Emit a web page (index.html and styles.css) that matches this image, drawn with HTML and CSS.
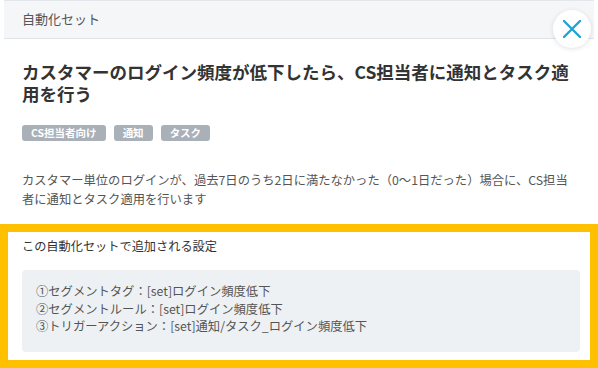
FILE: index.html
```html
<!DOCTYPE html>
<html lang="ja">
<head>
    <meta charset="UTF-8">
    <meta name="viewport" content="width=device-width, initial-scale=1.0">
    <title>自動化セット</title>
    <link rel="stylesheet" href="styles.css">
</head>
<body>
    <div class="modal">
        <div class="modal-header">自動化セット</div>

        <button class="close-btn" type="button" aria-label="閉じる">
            <svg width="18" height="18" viewBox="0 0 18 18">
                <path d="M1 1 L17 17 M17 1 L1 17" stroke="#1ea4d3" stroke-width="2.4" stroke-linecap="round" fill="none"/>
            </svg>
        </button>

        <div class="modal-body">
            <h1 class="set-title">カスタマーのログイン頻度が低下したら、CS担当者に通知とタスク適用を行う</h1>

            <div class="tags">
                <span class="tag">CS担当者向け</span>
                <span class="tag">通知</span>
                <span class="tag">タスク</span>
            </div>

            <p class="description">
                カスタマー単位のログインが、過去7日のうち2日に満たなかった（0〜1日だった）場合に、CS担当者に通知とタスク適用を行います
            </p>
        </div>

        <div class="settings">
            <div class="settings-title">この自動化セットで追加される設定</div>
            <div class="settings-box">
                <p>①セグメントタグ：[set]ログイン頻度低下</p>
                <p>②セグメントルール：[set]ログイン頻度低下</p>
                <p>③トリガーアクション：[set]通知/タスク_ログイン頻度低下</p>
            </div>
        </div>
    </div>
</body>
</html>
```

FILE: styles.css
```css
* {
    margin: 0;
    padding: 0;
    box-sizing: border-box;
}

body {
    font-family: "Noto Sans CJK JP", sans-serif;
    background: #fff;
    color: #555;
    width: 598px;
    height: 368px;
    overflow: hidden;
}

.modal {
    position: relative;
    width: 598px;
    height: 368px;
    display: flex;
    flex-direction: column;
}

.modal-header {
    margin: 0 4px;
    height: 39px;
    padding: 0 18px;
    background: #f5f6f8;
    border-top: 1px solid #e3e6ea;
    border-bottom: 1px solid #dfe3e8;
    font-size: 13px;
    line-height: 36px;
    color: #555;
}

.close-btn {
    position: absolute;
    top: 10px;
    right: 7px;
    width: 38px;
    height: 38px;
    border: none;
    border-radius: 50%;
    background: #fff;
    box-shadow: 0 1px 5px rgba(0, 0, 0, 0.12);
    display: flex;
    align-items: center;
    justify-content: center;
    cursor: pointer;
}

.modal-body {
    padding: 22px 22px 0;
}

.set-title {
    font-size: 17.5px;
    font-weight: bold;
    line-height: 22px;
    color: #333;
}

.tags {
    display: flex;
    gap: 8px;
    margin-top: 20px;
}

.tag {
    height: 16px;
    padding: 0 9px;
    border-radius: 3px;
    background: #a9b0b8;
    color: #fff;
    font-size: 10.5px;
    font-weight: bold;
    line-height: 16px;
}

.description {
    margin-top: 30px;
    font-size: 12.3px;
    line-height: 19px;
    color: #555;
}

.settings {
    margin-top: 15px;
    flex: 1;
    border: 8px solid #ffc000;
    padding: 4px 10px 7px 14px;
}

.settings-title {
    font-size: 12.2px;
    line-height: 20px;
    color: #333;
}

.settings-box {
    margin-top: 14px;
    background: #eef1f4;
    border-radius: 4px;
    padding: 13px 14px 16px;
    font-size: 12.3px;
    line-height: 17.5px;
    color: #555;
}
```
